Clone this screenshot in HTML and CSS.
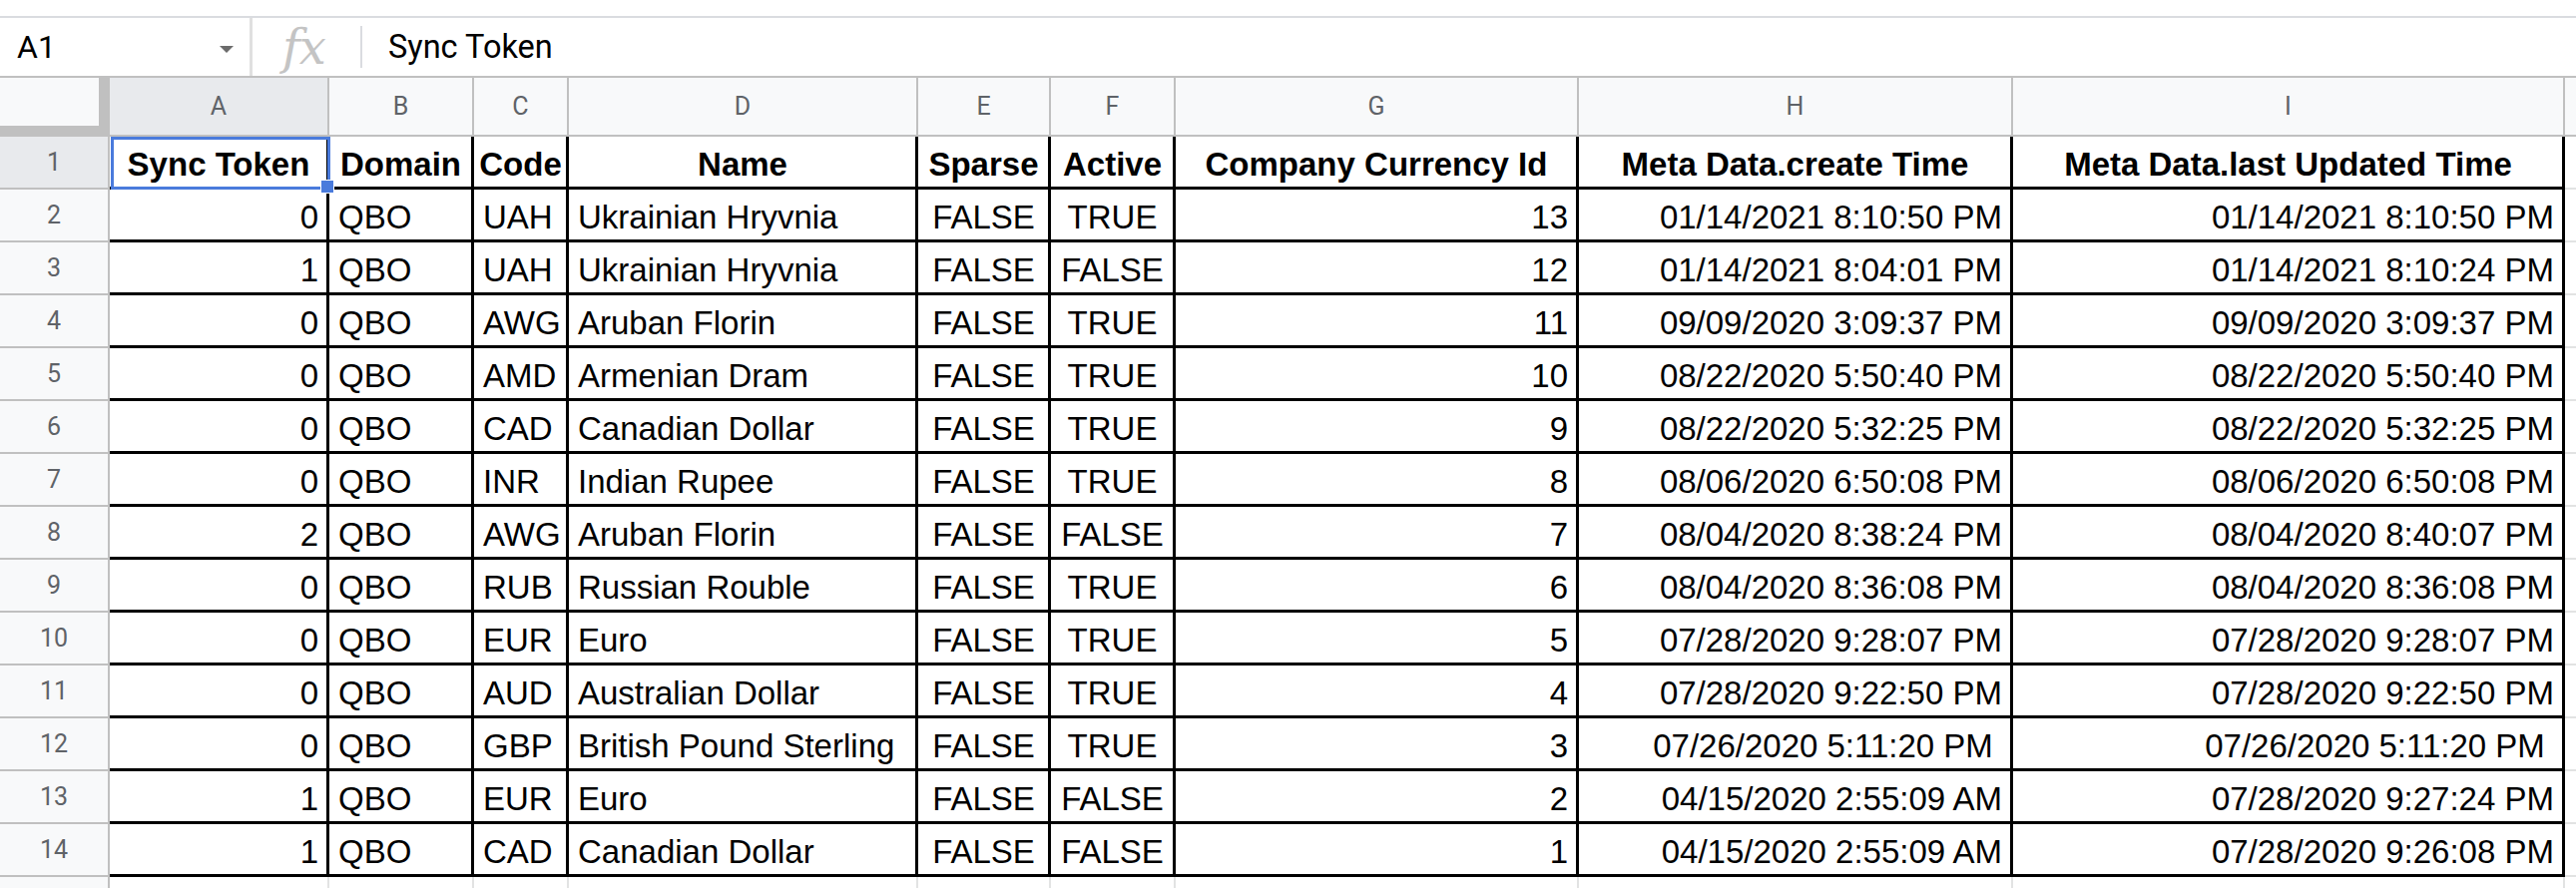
FILE: index.html
```html
<!DOCTYPE html>
<html lang="en">
<head>
    <meta charset="UTF-8">
    <title>Currency - Sheet1</title>
    <link rel="stylesheet" href="styles.css">
</head>
<body>

    <!-- Strip left of the toolbar -->
    <div class="top-edge"></div>

    <!-- Name box + formula bar -->
    <div class="formula-bar">
        <div class="name-box">
            <span>A1</span>
            <span class="caret"></span>
        </div>
        <div class="bar-divider"></div>
        <div class="fx">fx</div>
        <div class="fx-divider"></div>
        <div class="formula-text">Sync Token</div>
    </div>

    <!-- Grid -->
    <div class="sheet">
        <div class="head-row">
            <div class="corner"></div>
            <div class="col-head active">A</div>
            <div class="col-head">B</div>
            <div class="col-head">C</div>
            <div class="col-head">D</div>
            <div class="col-head">E</div>
            <div class="col-head">F</div>
            <div class="col-head">G</div>
            <div class="col-head">H</div>
            <div class="col-head">I</div>
            <div class="col-head last"></div>
        </div>

        <div class="row titles">
            <div class="row-head active">1</div>
            <div class="cell mid">Sync Token</div>
            <div class="cell mid">Domain</div>
            <div class="cell mid">Code</div>
            <div class="cell mid">Name</div>
            <div class="cell mid">Sparse</div>
            <div class="cell mid">Active</div>
            <div class="cell mid">Company Currency Id</div>
            <div class="cell mid">Meta Data.create Time</div>
            <div class="cell mid">Meta Data.last Updated Time</div>
            <div class="spill"></div>
        </div>

        <div class="row">
            <div class="row-head">2</div>
            <div class="cell num">0</div>
            <div class="cell">QBO</div>
            <div class="cell">UAH</div>
            <div class="cell">Ukrainian Hryvnia</div>
            <div class="cell mid">FALSE</div>
            <div class="cell mid">TRUE</div>
            <div class="cell num">13</div>
            <div class="cell num">01/14/2021 8:10:50 PM</div>
            <div class="cell num">01/14/2021 8:10:50 PM</div>
            <div class="spill"></div>
        </div>

        <div class="row">
            <div class="row-head">3</div>
            <div class="cell num">1</div>
            <div class="cell">QBO</div>
            <div class="cell">UAH</div>
            <div class="cell">Ukrainian Hryvnia</div>
            <div class="cell mid">FALSE</div>
            <div class="cell mid">FALSE</div>
            <div class="cell num">12</div>
            <div class="cell num">01/14/2021 8:04:01 PM</div>
            <div class="cell num">01/14/2021 8:10:24 PM</div>
            <div class="spill"></div>
        </div>

        <div class="row">
            <div class="row-head">4</div>
            <div class="cell num">0</div>
            <div class="cell">QBO</div>
            <div class="cell">AWG</div>
            <div class="cell">Aruban Florin</div>
            <div class="cell mid">FALSE</div>
            <div class="cell mid">TRUE</div>
            <div class="cell num">11</div>
            <div class="cell num">09/09/2020 3:09:37 PM</div>
            <div class="cell num">09/09/2020 3:09:37 PM</div>
            <div class="spill"></div>
        </div>

        <div class="row">
            <div class="row-head">5</div>
            <div class="cell num">0</div>
            <div class="cell">QBO</div>
            <div class="cell">AMD</div>
            <div class="cell">Armenian Dram</div>
            <div class="cell mid">FALSE</div>
            <div class="cell mid">TRUE</div>
            <div class="cell num">10</div>
            <div class="cell num">08/22/2020 5:50:40 PM</div>
            <div class="cell num">08/22/2020 5:50:40 PM</div>
            <div class="spill"></div>
        </div>

        <div class="row">
            <div class="row-head">6</div>
            <div class="cell num">0</div>
            <div class="cell">QBO</div>
            <div class="cell">CAD</div>
            <div class="cell">Canadian Dollar</div>
            <div class="cell mid">FALSE</div>
            <div class="cell mid">TRUE</div>
            <div class="cell num">9</div>
            <div class="cell num">08/22/2020 5:32:25 PM</div>
            <div class="cell num">08/22/2020 5:32:25 PM</div>
            <div class="spill"></div>
        </div>

        <div class="row">
            <div class="row-head">7</div>
            <div class="cell num">0</div>
            <div class="cell">QBO</div>
            <div class="cell">INR</div>
            <div class="cell">Indian Rupee</div>
            <div class="cell mid">FALSE</div>
            <div class="cell mid">TRUE</div>
            <div class="cell num">8</div>
            <div class="cell num">08/06/2020 6:50:08 PM</div>
            <div class="cell num">08/06/2020 6:50:08 PM</div>
            <div class="spill"></div>
        </div>

        <div class="row">
            <div class="row-head">8</div>
            <div class="cell num">2</div>
            <div class="cell">QBO</div>
            <div class="cell">AWG</div>
            <div class="cell">Aruban Florin</div>
            <div class="cell mid">FALSE</div>
            <div class="cell mid">FALSE</div>
            <div class="cell num">7</div>
            <div class="cell num">08/04/2020 8:38:24 PM</div>
            <div class="cell num">08/04/2020 8:40:07 PM</div>
            <div class="spill"></div>
        </div>

        <div class="row">
            <div class="row-head">9</div>
            <div class="cell num">0</div>
            <div class="cell">QBO</div>
            <div class="cell">RUB</div>
            <div class="cell">Russian Rouble</div>
            <div class="cell mid">FALSE</div>
            <div class="cell mid">TRUE</div>
            <div class="cell num">6</div>
            <div class="cell num">08/04/2020 8:36:08 PM</div>
            <div class="cell num">08/04/2020 8:36:08 PM</div>
            <div class="spill"></div>
        </div>

        <div class="row">
            <div class="row-head">10</div>
            <div class="cell num">0</div>
            <div class="cell">QBO</div>
            <div class="cell">EUR</div>
            <div class="cell">Euro</div>
            <div class="cell mid">FALSE</div>
            <div class="cell mid">TRUE</div>
            <div class="cell num">5</div>
            <div class="cell num">07/28/2020 9:28:07 PM</div>
            <div class="cell num">07/28/2020 9:28:07 PM</div>
            <div class="spill"></div>
        </div>

        <div class="row">
            <div class="row-head">11</div>
            <div class="cell num">0</div>
            <div class="cell">QBO</div>
            <div class="cell">AUD</div>
            <div class="cell">Australian Dollar</div>
            <div class="cell mid">FALSE</div>
            <div class="cell mid">TRUE</div>
            <div class="cell num">4</div>
            <div class="cell num">07/28/2020 9:22:50 PM</div>
            <div class="cell num">07/28/2020 9:22:50 PM</div>
            <div class="spill"></div>
        </div>

        <div class="row">
            <div class="row-head">12</div>
            <div class="cell num">0</div>
            <div class="cell">QBO</div>
            <div class="cell">GBP</div>
            <div class="cell">British Pound Sterling</div>
            <div class="cell mid">FALSE</div>
            <div class="cell mid">TRUE</div>
            <div class="cell num">3</div>
            <div class="cell num">07/26/2020 5:11:20 PM&nbsp;</div>
            <div class="cell num">07/26/2020 5:11:20 PM&nbsp;</div>
            <div class="spill"></div>
        </div>

        <div class="row">
            <div class="row-head">13</div>
            <div class="cell num">1</div>
            <div class="cell">QBO</div>
            <div class="cell">EUR</div>
            <div class="cell">Euro</div>
            <div class="cell mid">FALSE</div>
            <div class="cell mid">FALSE</div>
            <div class="cell num">2</div>
            <div class="cell num">04/15/2020 2:55:09 AM</div>
            <div class="cell num">07/28/2020 9:27:24 PM</div>
            <div class="spill"></div>
        </div>

        <div class="row">
            <div class="row-head">14</div>
            <div class="cell num">1</div>
            <div class="cell">QBO</div>
            <div class="cell">CAD</div>
            <div class="cell">Canadian Dollar</div>
            <div class="cell mid">FALSE</div>
            <div class="cell mid">FALSE</div>
            <div class="cell num">1</div>
            <div class="cell num">04/15/2020 2:55:09 AM</div>
            <div class="cell num">07/28/2020 9:26:08 PM</div>
            <div class="spill"></div>
        </div>

        <!-- Row 15, only its top edge is in view -->
        <div class="row blank">
            <div class="row-head"></div>
            <div class="cell"></div>
            <div class="cell"></div>
            <div class="cell"></div>
            <div class="cell"></div>
            <div class="cell"></div>
            <div class="cell"></div>
            <div class="cell"></div>
            <div class="cell"></div>
            <div class="cell"></div>
            <div class="spill"></div>
        </div>

        <!-- Active cell outline -->
        <div class="selection"></div>
    </div>

</body>
</html>
```

FILE: styles.css
```css
/* Sheet column widths, row header first */
:root {
    --cols: 110px 220px 145px 95px 350px 133px 125px 404px 435px 553px 1fr;
    --grid-line: #c0c0c0;
    --head-bg: #f8f9fa;
    --head-active: #e8eaed;
}

body {
    margin: 0;
    width: 2581px;
    height: 890px;
    overflow: hidden;
    background: #fff;
    font-family: "Liberation Sans", Arial, sans-serif;
    color: #000;
}

/* Top strip */
.top-edge {
    height: 16px;
    border-bottom: 2px solid #dadce0;
}

/* Formula bar */
.formula-bar {
    display: flex;
    align-items: center;
    height: 58px;
    font-family: Roboto, "Liberation Sans", sans-serif;
}

.name-box {
    width: 250px;
    box-sizing: border-box;
    padding: 0 16px 0 17px;
    display: flex;
    align-items: center;
    justify-content: space-between;
    font-size: 32px;
    color: #000;
}

.caret {
    width: 0;
    height: 0;
    margin-top: 4px;
    border-left: 7px solid transparent;
    border-right: 7px solid transparent;
    border-top: 7px solid #6b6b6b;
}

.bar-divider {
    width: 3px;
    align-self: stretch;
    background: #e0e0e0;
}

.fx {
    margin-left: 30px;
    width: 42px;
    font-family: "DejaVu Serif", "Liberation Serif", serif;
    font-style: italic;
    font-size: 48px;
    line-height: 1;
    letter-spacing: -1px;
    color: #c4c4c4;
}

.fx-divider {
    width: 2px;
    height: 42px;
    margin-left: 36px;
    background: #dadce0;
}

.formula-text {
    margin-left: 26px;
    font-size: 32.5px;
    color: #000;
}

/* Grid */
.sheet {
    position: relative;
}

.head-row {
    display: grid;
    grid-template-columns: var(--cols);
    height: 61px;
    box-sizing: border-box;
    border-top: 2px solid var(--grid-line);
    background: var(--head-bg);
}

.corner {
    border-right: 11px solid var(--grid-line);
    border-bottom: 11px solid var(--grid-line);
}

.col-head {
    display: flex;
    align-items: center;
    justify-content: center;
    border-right: 2px solid var(--grid-line);
    border-bottom: 2px solid var(--grid-line);
    font-family: Roboto, sans-serif;
    font-size: 25px;
    color: #5f6368;
}

.col-head.active {
    background: var(--head-active);
}

.col-head.last {
    border-right: none;
}

.row {
    display: grid;
    grid-template-columns: var(--cols);
    height: 53px;
}

.row > div {
    box-sizing: border-box;
    min-width: 0;
}

.row-head {
    display: flex;
    align-items: center;
    justify-content: center;
    background: var(--head-bg);
    border-right: 2px solid var(--grid-line);
    border-bottom: 2px solid var(--grid-line);
    font-family: Roboto, sans-serif;
    font-size: 25px;
    color: #5f6368;
}

.row-head.active {
    background: var(--head-active);
}

.cell {
    display: flex;
    align-items: flex-end;
    padding: 0 8px 6px 9px;
    border-right: 3px solid #000;
    border-bottom: 3px solid #000;
    font-size: 33px;
    line-height: 1;
    white-space: pre;
    overflow: hidden;
}

.num {
    justify-content: flex-end;
}

.mid {
    justify-content: center;
}

.titles .cell {
    font-weight: bold;
}

/* Column J, only the edge shows */
.spill {
    border-bottom: 2px solid #e2e3e3;
}

.blank .cell {
    border-right: 2px solid #e2e3e3;
    border-bottom: none;
}

/* Active cell A1 */
.selection {
    position: absolute;
    left: 111px;
    top: 61px;
    width: 220px;
    height: 53px;
    box-sizing: border-box;
    border: 3px solid #4a7bdc;
}

.selection::after {
    content: "";
    position: absolute;
    right: -7px;
    bottom: -7px;
    width: 12px;
    height: 12px;
    background: #4a7bdc;
    border: 1px solid #fff;
}
```
